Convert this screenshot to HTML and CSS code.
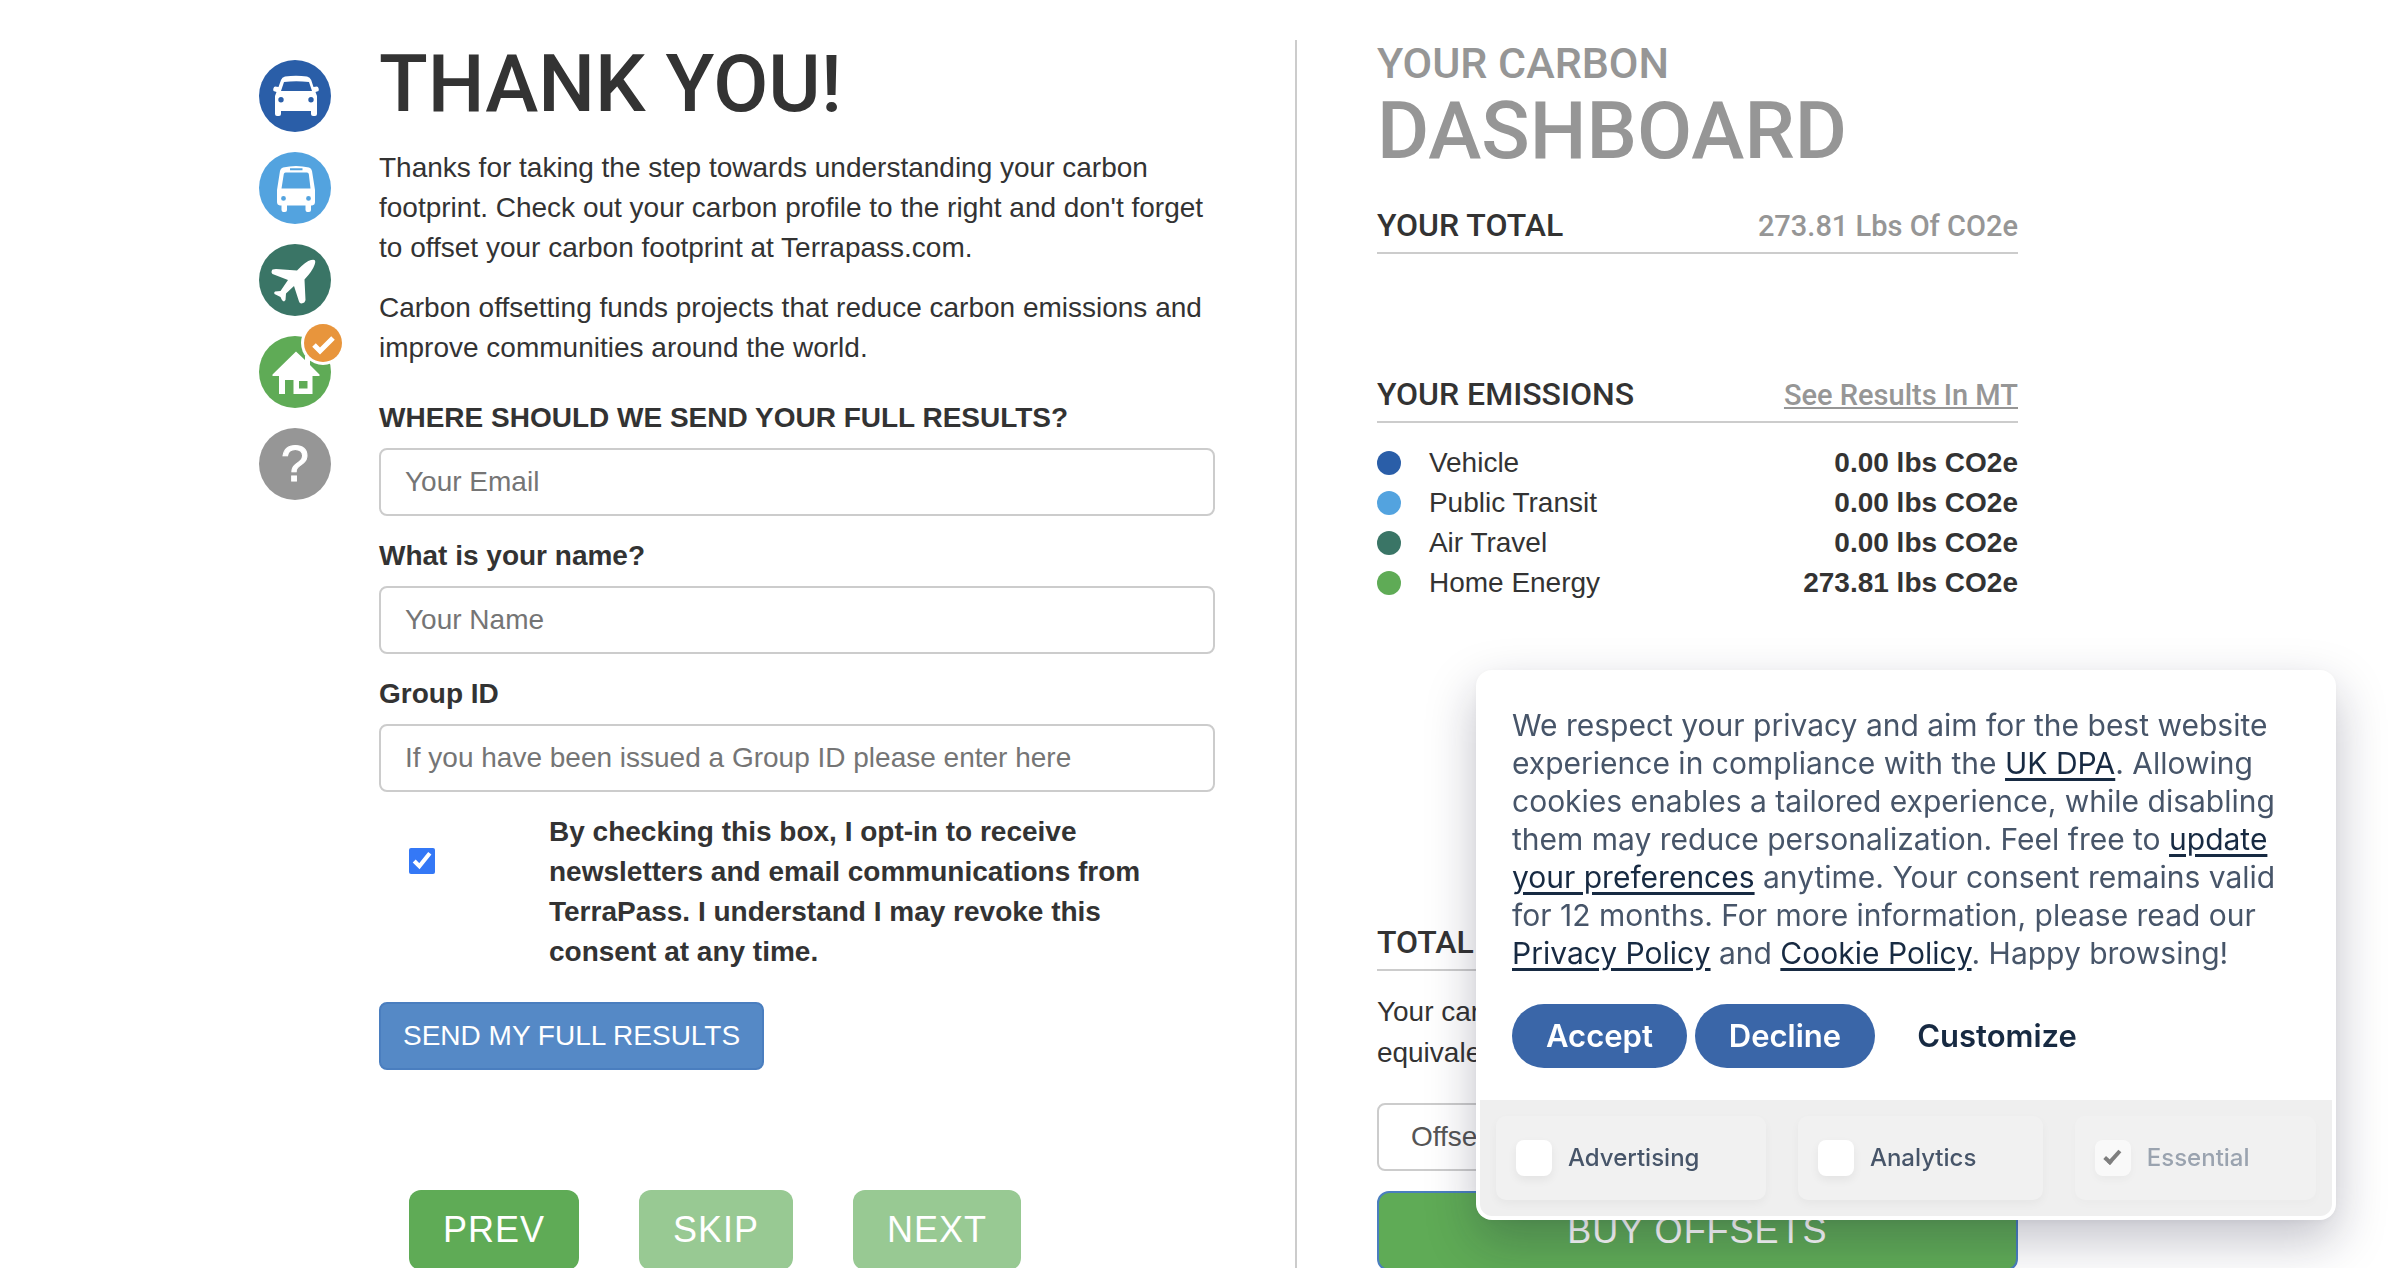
FILE: index.html
```html
<!DOCTYPE html>
<html lang="en">
<head>
<meta charset="utf-8">
<title>Carbon Footprint Calculator</title>
<link rel="stylesheet" href="styles.css">
</head>
<body>
<main class="calculator">
  <nav class="steps" aria-label="Calculator sections">
    <a class="step step-vehicle" href="#vehicle" aria-label="Vehicle">
      <svg viewBox="0 0 72 72" aria-hidden="true"><path fill="#fff" fill-rule="evenodd" d="M26 16.500Q37 15 48 16.500Q51 17 52.200 20L54.500 27L58 26.500Q60.500 28 59.500 31L56.500 32L58 36V54Q58 56 56 56H54Q52 56 52 54V51H22V54Q22 56 20 56H18Q16 56 16 54V36L17.500 32L14.500 31Q13.500 28 16 26.500L19.500 27L22 20Q23 17 26 16.500ZM25 22L22 31H53L50 22Q37 20.500 25 22ZM22 37A2.700 2.700 0 1 0 22 42.400A2.700 2.700 0 1 0 22 37ZM52 37A2.700 2.700 0 1 0 52 42.400A2.700 2.700 0 1 0 52 37Z"/></svg>
    </a>
    <a class="step step-transit" href="#transit" aria-label="Public Transit">
      <svg viewBox="0 0 72 72" aria-hidden="true"><path fill="#fff" fill-rule="evenodd" d="M24 15.500Q37 12.500 50 15.500Q52.500 16 53 19L56 38V50Q56 53 53 53.500H52V58Q52 60 50 60H48.500Q46.500 60 46.500 58V53.500H28V58Q28 60 26 60H24.500Q22.500 60 22.500 58V53.500H21Q18 53 18 50V38L21 19Q21.500 16 24 15.500ZM26.500 20.500Q25 20.500 24.800 22L22.500 36.500H51.500L49.800 22Q49.500 20.500 48 20.500ZM31 16.300V18.200H43.500V16.300ZM24.500 44A2.400 2.400 0 1 0 24.500 48.800A2.400 2.400 0 1 0 24.500 44ZM49.500 44A2.400 2.400 0 1 0 49.500 48.800A2.400 2.400 0 1 0 49.500 44Z"/></svg>
    </a>
    <a class="step step-air" href="#air" aria-label="Air Travel">
      <svg viewBox="0 0 72 72" aria-hidden="true"><path fill="#fff" d="M55.500 16Q57 17 55.500 21Q53.500 27 45.500 35.500L46.500 56Q46 59 42.500 59.500Q40.500 59.500 40 57.500L35 42L27 49.500L26.500 56L25 57.500Q23 57 21.500 53L15.500 50Q14.500 48.500 16 47.500L21.500 47L29 36L13.500 30Q11.500 28 13.500 25.500L17 25L38 26.500Q47 17 52 16Q54.500 15.300 55.500 16Z"/></svg>
    </a>
    <a class="step step-home" href="#home" aria-label="Home Energy, completed">
      <svg viewBox="0 0 72 72" aria-hidden="true"><path fill="#fff" fill-rule="evenodd" d="M37 15.500L46 24V20H51V29L60.500 38.500V40H53.500V58H34.500V44H26V58H20V40H13.500V38.500ZM40 45V52.500H48.500V45Z"/></svg>
      <svg class="step-badge" viewBox="0 0 46 46" aria-hidden="true"><circle cx="23" cy="23" r="22" fill="#fff"/><circle cx="23" cy="23" r="19" fill="#e8953c"/><path d="M14 25L20 31L33 18" fill="none" stroke="#fff" stroke-width="5"/></svg>
    </a>
    <a class="step step-help" href="#help" aria-label="Results">?</a>
  </nav>

  <section class="results">
    <h1>THANK YOU!</h1>
    <p>Thanks for taking the step towards understanding your carbon footprint. Check out your carbon profile to the right and don't forget to offset your carbon footprint at Terrapass.com.</p>
    <p>Carbon offsetting funds projects that reduce carbon emissions and improve communities around the world.</p>
    <form class="results-form">
      <div class="field">
        <label for="email">WHERE SHOULD WE SEND YOUR FULL RESULTS?</label>
        <input class="control" id="email" type="email" placeholder="Your Email">
      </div>
      <div class="field">
        <label for="name">What is your name?</label>
        <input class="control" id="name" type="text" placeholder="Your Name">
      </div>
      <div class="field">
        <label for="group">Group ID</label>
        <input class="control" id="group" type="text" placeholder="If you have been issued a Group ID please enter here">
      </div>
      <div class="opt-in">
        <input id="opt-in" type="checkbox" checked>
        <label for="opt-in">By checking this box, I opt-in to receive newsletters and email communications from TerraPass. I understand I may revoke this consent at any time.</label>
      </div>
      <button class="send" type="button">SEND MY FULL RESULTS</button>
    </form>
    <div class="pager">
      <button class="big-button" type="button">PREV</button>
      <button class="big-button" type="button" disabled>SKIP</button>
      <button class="big-button" type="button" disabled>NEXT</button>
    </div>
  </section>

  <aside class="dashboard">
    <h2><span class="title-small">YOUR CARBON</span><span class="title-large">DASHBOARD</span></h2>
    <div class="summary-head">
      <h3>YOUR TOTAL</h3>
      <span class="summary-side">273.81 Lbs Of CO2e</span>
    </div>
    <div class="summary-head emissions-head">
      <h3>YOUR EMISSIONS</h3>
      <a class="summary-side" href="#mt">See Results In MT</a>
    </div>
    <table class="emissions">
      <tr><th scope="row"><span class="dot dot-vehicle"></span>Vehicle</th><td>0.00 lbs CO2e</td></tr>
      <tr><th scope="row"><span class="dot dot-transit"></span>Public Transit</th><td>0.00 lbs CO2e</td></tr>
      <tr><th scope="row"><span class="dot dot-air"></span>Air Travel</th><td>0.00 lbs CO2e</td></tr>
      <tr><th scope="row"><span class="dot dot-home"></span>Home Energy</th><td>273.81 lbs CO2e</td></tr>
    </table>
    <div class="summary-head total-head">
      <h3>TOTAL</h3>
    </div>
    <p class="equivalent">Your car<br>equivale</p>
    <select class="control offset-select" aria-label="Offset">
      <option>Offse</option>
    </select>
    <button class="big-button buy" type="button">BUY OFFSETS</button>
  </aside>
</main>

<div class="consent" role="dialog" aria-label="Cookie consent">
  <div class="consent-body">
    <p>We respect your privacy and aim for the best website experience in compliance with the <a href="#dpa">UK DPA</a>. Allowing cookies enables a tailored experience, while disabling them may reduce personalization. Feel free to <a href="#preferences">update your preferences</a> anytime. Your consent remains valid for 12 months. For more information, please read our <a href="#privacy">Privacy Policy</a> and <a href="#cookies">Cookie Policy</a>. Happy browsing!</p>
    <div class="consent-actions">
      <button class="pill" type="button">Accept</button>
      <button class="pill" type="button">Decline</button>
      <button class="customize" type="button">Customize</button>
    </div>
  </div>
  <div class="categories">
    <label class="category"><input type="checkbox">Advertising</label>
    <label class="category"><input type="checkbox">Analytics</label>
    <label class="category essential"><input type="checkbox" checked disabled>Essential</label>
  </div>
</div>
</body>
</html>
```
FILE: styles.css
```css
*, *::before, *::after { box-sizing: border-box; }

:root {
  --vehicle: #2a5ea8;
  --transit: #53a3df;
  --air: #3a7566;
  --home: #5fab56;
  --muted: #969696;
  --rule: #ccc;
}

body {
  margin: 0;
  background: #fff;
  color: #333;
  font: 28px/40px "Liberation Sans", Arial, sans-serif;
}

h1, h2, h3, p { margin: 0; }

h1, h2, h3, .summary-side { font-family: Roboto, sans-serif; font-weight: 500; }

button, input, select { font: inherit; }

.calculator {
  display: grid;
  grid-template-columns: 120px minmax(0, 57fr) minmax(0, 45fr);
  padding: 40px 382px 0 259px;
}

/* Section icons */
.steps {
  display: flex;
  flex-direction: column;
  gap: 20px;
  padding-top: 20px;
}

.step {
  position: relative;
  display: flex;
  align-items: center;
  justify-content: center;
  width: 72px;
  height: 72px;
  border-radius: 50%;
  color: #fff;
  font-size: 50px;
  line-height: 72px;
  text-decoration: none;
}

.step svg { width: 72px; height: 72px; }
.step .step-badge { position: absolute; top: -16px; right: -15px; width: 46px; height: 46px; }
.step-vehicle, .dot-vehicle { background: var(--vehicle); }
.step-transit, .dot-transit { background: var(--transit); }
.step-air, .dot-air { background: var(--air); }
.step-home, .dot-home { background: var(--home); }
.step-help { background: var(--muted); -webkit-text-stroke: 1px #fff; }

/* Results form */
.results { padding-right: 70px; }
.results h1 { margin-bottom: 20px; font-size: 80px; line-height: 88px; }
.results p { margin-bottom: 20px; }
.results-form { padding: 10px 10px 0 0; }
.field { margin-bottom: 20px; }
.field label { display: block; margin-bottom: 10px; font-weight: 700; }

.control {
  display: block;
  width: 100%;
  height: 68px;
  padding: 12px 24px;
  border: 2px solid var(--rule);
  border-radius: 8px;
  background: #fff;
  color: #555;
}

.control::placeholder { color: #757575; opacity: 1; }

.opt-in {
  display: flex;
  align-items: flex-start;
  gap: 114px;
  padding: 0 30px;
  margin-bottom: 30px;
}

.opt-in input { flex: none; width: 26px; height: 26px; margin: 36px 0 0; accent-color: #3478f6; }
.opt-in label { font-weight: 700; }

.send {
  height: 68px;
  padding: 0 22px;
  border: 2px solid #4a7ebf;
  border-radius: 8px;
  background: #5589c6;
  color: #fff;
}

.pager { display: flex; gap: 60px; padding: 120px 30px 0; }

.big-button {
  height: 80px;
  padding: 0 34px;
  border: 0;
  border-radius: 12px;
  background: var(--home);
  color: #fff;
  font-size: 36px;
  letter-spacing: 1px;
}

.big-button:disabled { background: #98c993; }

/* Dashboard */
.dashboard { border-left: 2px solid var(--rule); padding-left: 80px; }
.dashboard h2 { color: var(--muted); }
.title-small, .title-large { display: block; }
.title-small { font-size: 43px; line-height: 47px; }
.title-large { font-size: 80px; line-height: 88px; }

.summary-head {
  display: flex;
  align-items: baseline;
  justify-content: space-between;
  height: 46px;
  margin-top: 33px;
  border-bottom: 2px solid var(--rule);
}

.summary-head h3 { font-size: 32px; line-height: 34px; }
.summary-side { color: var(--muted); font-size: 29px; line-height: 31px; }
.emissions-head { margin-top: 123px; }
.emissions { width: 100%; margin-top: 20px; border-collapse: collapse; }
.emissions th, .emissions td { padding: 0; }
.emissions th { display: flex; align-items: center; gap: 28px; font-weight: 400; }
.emissions td { font-weight: 700; text-align: right; }
.dot { width: 24px; height: 24px; border-radius: 50%; }
.total-head { margin-top: 322px; }
.equivalent { margin: 20px 0 30px; line-height: 41px; }
.offset-select { padding: 12px 32px; appearance: none; }
.buy { width: 100%; margin-top: 20px; border: 2px solid #4a7ebf; }

/* Cookie consent */
.consent {
  position: fixed;
  right: 64px;
  bottom: 48px;
  width: 860px;
  padding: 4px;
  border-radius: 16px;
  background: #fff;
  box-shadow: 0 20px 50px rgba(20, 20, 50, 0.26), 0 2px 8px rgba(20, 20, 50, 0.04);
  color: #475569;
  font-family: Inter, sans-serif;
}

.consent-body { padding: 32px; }
.consent-body p { font-size: 30px; line-height: 38px; }
.consent a { color: #172a42; text-decoration-thickness: 3px; text-underline-offset: 4px; }
.consent-actions { display: flex; gap: 8px; margin-top: 32px; }

.pill, .customize {
  height: 64px;
  padding: 0 34px;
  border: 0;
  border-radius: 32px;
  background: #3a66a8;
  color: #fff;
  font-size: 31px;
  font-weight: 600;
}

.customize { background: none; color: #172a42; }

.categories {
  display: flex;
  gap: 32px;
  padding: 16px;
  border-radius: 0 0 12px 12px;
  background: #efefef;
}

.category {
  display: flex;
  flex: 1 1 auto;
  align-items: center;
  gap: 16px;
  height: 84px;
  padding: 0 20px;
  border-radius: 10px;
  background: #f1f1f1;
  box-shadow: 0 4px 10px rgba(0, 0, 0, 0.04);
  font-size: 24px;
  font-weight: 500;
}

.category input {
  display: grid;
  place-items: center;
  width: 36px;
  height: 36px;
  margin: 0;
  border-radius: 8px;
  background: #fff;
  box-shadow: 0 4px 10px rgba(0, 0, 0, 0.06);
  appearance: none;
}

.category input:checked::after {
  content: "";
  width: 17px;
  height: 9px;
  border: solid #333;
  border-width: 0 0 4px 4px;
  transform: rotate(-48deg) translate(2px, -2px);
}

.essential { box-shadow: 0 4px 10px rgba(0, 0, 0, 0.02); color: #9aa3af; }
.essential input { opacity: 0.6; }
```
